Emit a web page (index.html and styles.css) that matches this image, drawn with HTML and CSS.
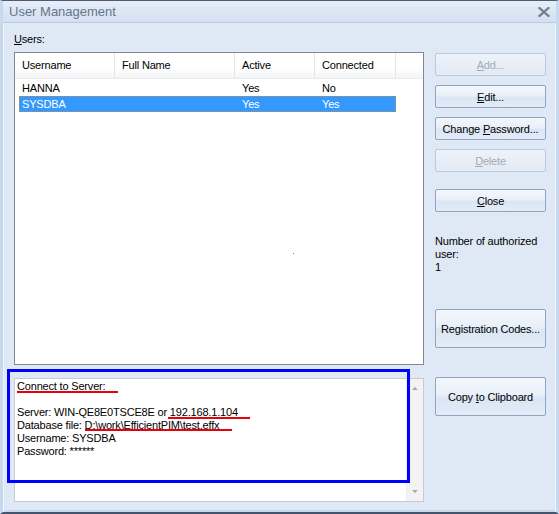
FILE: index.html
```html
<!DOCTYPE html>
<html lang="en">
<head>
    <meta charset="UTF-8">
    <title>User Management</title>
    <link rel="stylesheet" href="styles.css">
</head>
<body>
    <div class="window">
        <div class="titlebar">
            <span class="title">User Management</span>
            <svg class="close-x" width="12" height="10" viewBox="0 0 12 10">
                <path d="M1.5 1 L10.5 9 M10.5 1 L1.5 9" stroke="#6f7d92" stroke-width="2.2" stroke-linecap="square"/>
            </svg>
        </div>
        <div class="content">
            <div class="left">
                <div class="users-label"><u>U</u>sers:</div>
                <div class="listbox">
                    <div class="lv-header">
                        <div class="hcell c1">Username</div>
                        <div class="hcell c2">Full Name</div>
                        <div class="hcell c3">Active</div>
                        <div class="hcell c4">Connected</div>
                        <div class="hcell filler"></div>
                    </div>
                    <div class="lv-row">
                        <div class="cell r1">HANNA</div>
                        <div class="cell c2"></div>
                        <div class="cell c3">Yes</div>
                        <div class="cell c4">No</div>
                    </div>
                    <div class="lv-row selected">
                        <div class="cell r1">SYSDBA</div>
                        <div class="cell c2"></div>
                        <div class="cell c3">Yes</div>
                        <div class="cell c4">Yes</div>
                    </div>
                </div>
                <div class="memo">
                    <div class="memo-text">
                        <div>Connect to Server:</div>
                        <div>&nbsp;</div>
                        <div>Server: WIN-QE8E0TSCE8E or 192.168.1.104</div>
                        <div>Database file: D:\work\EfficientPIM\test.effx</div>
                        <div>Username: SYSDBA</div>
                        <div>Password: ******</div>
                    </div>
                    <div class="vscroll">
                        <span class="arrow up"></span>
                        <span class="arrow down"></span>
                    </div>
                </div>
            </div>
            <div class="side">
                <button class="btn first" disabled><u>A</u>dd...</button>
                <button class="btn"><u>E</u>dit...</button>
                <button class="btn">Change <u>P</u>assword...</button>
                <button class="btn" disabled><u>D</u>elete</button>
                <button class="btn close-btn"><u>C</u>lose</button>
                <div class="info">Number of authorized<br>user:<br>1</div>
                <button class="btn tall reg-btn">Registration Codes...</button>
                <button class="btn tall copy-btn">Copy <u>t</u>o Clipboard</button>
            </div>
        </div>

        <div class="mark-box"></div>
        <div class="mark-line line-a"></div>
        <div class="mark-line line-b"></div>
        <div class="mark-line line-c"></div>
        <div class="stray-dot"></div>
    </div>
</body>
</html>
```

FILE: styles.css
```css
body { margin: 0; font-family: "Liberation Sans", Arial, sans-serif; font-size: 11px; letter-spacing: -0.18px; color: #000; background: #dfe9f6; }
.window { position: relative; width: 559px; height: 514px; box-sizing: border-box; background: #dfe9f6; border-top: 1px solid #4b5c74; border-left: 3px solid #c8d9ee; border-right: 3px solid #c8d9ee; border-bottom: 2px solid #44546c; box-shadow: inset 1px 0 0 #eef4fb, inset -1px 0 0 #eef4fb, inset 0 -2px 0 #c8d9ee; }
.titlebar { height: 22px; display: flex; align-items: center; justify-content: space-between; padding: 0 6px 0 6px; background: linear-gradient(#e6eef8, #d3e0f1); border-bottom: 1px solid #b7cbe4; box-sizing: border-box; }
.title { font-size: 13px; letter-spacing: 0; color: #66748a; }
.close-x { margin-top: 1px; }
.content { display: flex; gap: 11px; padding: 10px 0 0 11px; }
.left { width: 410px; }
.users-label { line-height: 13px; margin-bottom: 6px; }
.listbox { height: 313px; box-sizing: border-box; border: 1px solid #828790; background: #fff; }
.lv-header { display: flex; height: 25px; background: linear-gradient(#ffffff 0%, #ffffff 55%, #f4f5f7 100%); border-bottom: 1px solid #e8eaec; }
.hcell { line-height: 25px; padding-left: 7px; box-sizing: border-box; border-right: 1px solid #e3e5e8; }
.hcell.c1 { width: 100px; }
.hcell.c2 { width: 120px; }
.hcell.c3 { width: 80px; }
.hcell.c4 { width: 81px; }
.hcell.filler { flex: 1; border-right: none; }
.lv-row { display: flex; height: 16px; line-height: 16px; margin-left: 4px; width: 377px; box-sizing: border-box; }
.lv-header + .lv-row { margin-top: 1px; }
.cell { box-sizing: border-box; padding-left: 7px; white-space: nowrap; }
.cell.r1 { width: 96px; padding-left: 3px; }
.cell.c2 { width: 120px; }
.cell.c3 { width: 80px; }
.cell.c4 { width: 81px; }
.lv-row.selected { background: #3399ff; color: #fff; outline: 1px dotted #c9884a; outline-offset: -1px; }
.memo { margin-top: 13px; height: 124px; box-sizing: border-box; border: 1px solid #c5cbd3; background: #fff; display: flex; }
.memo-text { flex: 1; padding: 1px 0 0 2px; line-height: 13px; white-space: nowrap; }
.vscroll { width: 17px; background: #f3f3f3; border-left: 1px solid #ececec; display: flex; flex-direction: column; justify-content: space-between; align-items: center; padding: 8px 0 8px; box-sizing: border-box; }
.arrow { width: 0; height: 0; border-left: 3px solid transparent; border-right: 3px solid transparent; }
.arrow.up { border-bottom: 3px solid #a8a8a8; }
.arrow.down { border-top: 3px solid #a8a8a8; }
.side { width: 111px; display: flex; flex-direction: column; padding-top: 20px; }
.btn { height: 23px; margin-bottom: 9px; box-sizing: border-box; border: 1px solid #8ea4c1; border-radius: 2px; background: linear-gradient(#f3f7fc 0%, #e9f0f9 45%, #dbe6f4 55%, #e3ecf7 100%); font-family: "Liberation Sans", Arial, sans-serif; font-size: 11px; letter-spacing: -0.18px; color: #000; padding: 0; text-align: center; }
.btn:disabled { border-color: #b9c9dd; color: #a3abb6; background: linear-gradient(#eef3fa, #e2eaf5); }
.btn.close-btn { margin-top: 8px; }
.info { margin-top: 14px; line-height: 13px; }
.btn.tall { height: 39px; }
.btn.reg-btn { margin-top: 35px; margin-bottom: 29px; }
.mark-box { position: absolute; left: 4px; top: 368px; width: 403px; height: 114px; box-sizing: border-box; border: 3px solid #0000ff; }
.mark-line { position: absolute; height: 2px; background: #e8000b; }
.line-a { left: 14px; top: 390px; width: 101px; }
.line-b { left: 165px; top: 416px; width: 82px; }
.line-c { left: 82px; top: 428px; width: 147px; }
.stray-dot { position: absolute; left: 290px; top: 252px; width: 1px; height: 1px; background: #808080; }
```
